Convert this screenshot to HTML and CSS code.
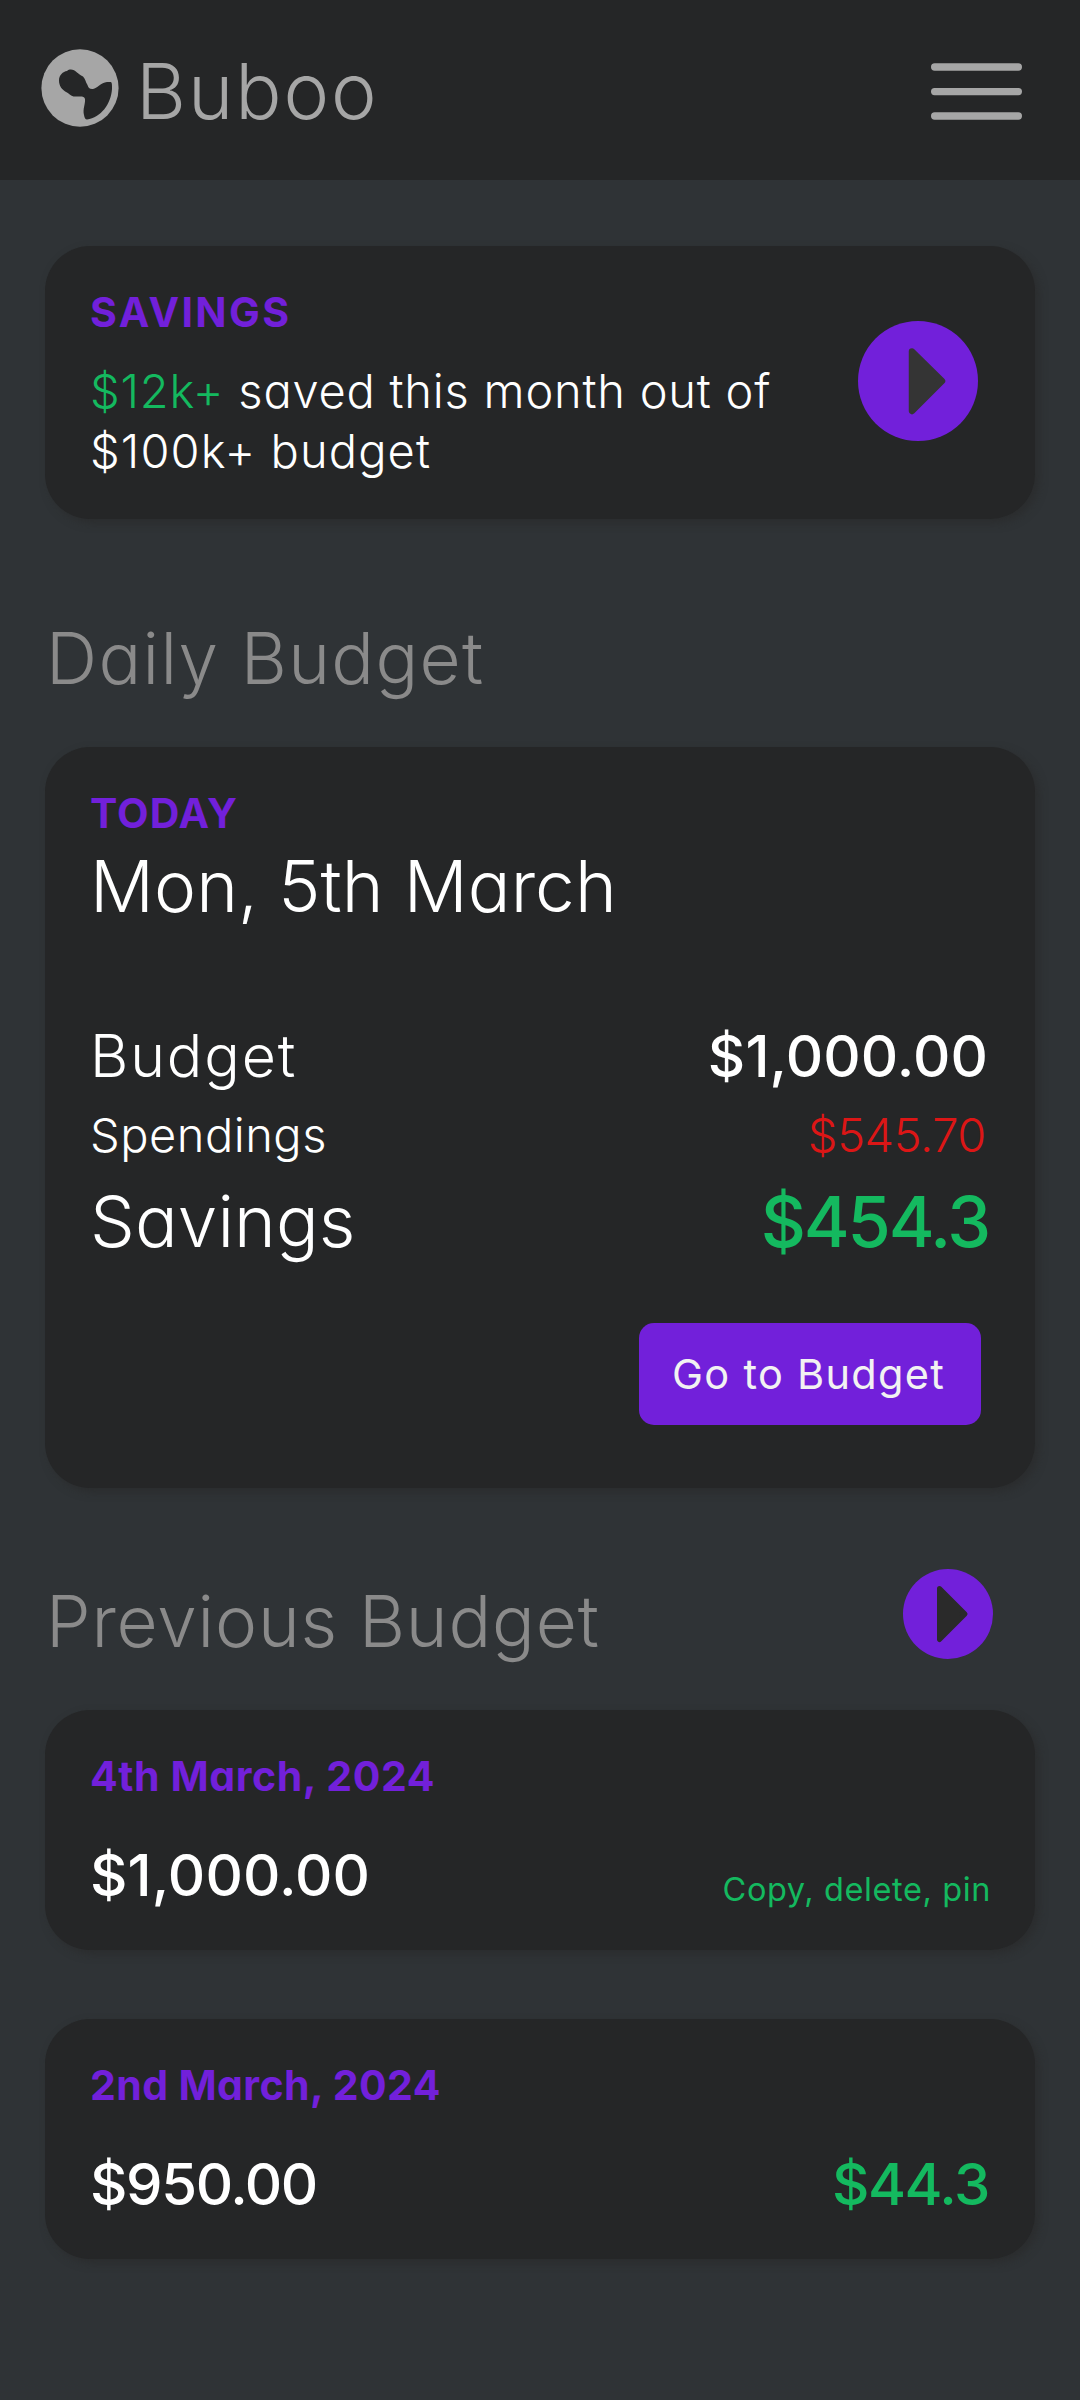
FILE: index.html
```html
<!DOCTYPE html>
<html lang="en">
<head>
<meta charset="utf-8">
<title>Buboo</title>
<link rel="stylesheet" href="styles.css">
</head>
<body>
<header class="topbar">
  <div class="brand">
    <svg class="logo" viewBox="0 0 78 78" aria-hidden="true">
      <ellipse cx="39" cy="39" rx="38.6" ry="38.8" fill="#a6a6a6"/>
      <path fill="#252627" d="M18 31.5C18 26 22 22.5 26 22C29 19.5 33 20.500 36 23.500C38 24.500 39 26.500 42 27.500C44.500 30 44.500 33 46.500 36C47 38.500 49 40.500 52 40C56 39.500 60 33.500 66 33L70 33C71.200 34 71 37 71 40C70 55 60 68.500 46 70.500C44.500 70.500 43.500 69 43 66C41.500 60 44.500 55 44 50C43.500 48 42 47.500 39 47.500L32.500 47.500C30 47 28 44.500 26 43.500C21 41 18 37 18 31.500Z"/>
    </svg>
    <span class="brand-name">Buboo</span>
  </div>
  <svg class="menu" viewBox="0 0 91 58" aria-label="Menu" fill="#a6a6a6">
    <rect y="0.300" width="91" height="7.400" rx="3.700"/>
    <rect y="25" width="91" height="7.200" rx="3.600"/>
    <rect y="49.300" width="91" height="7.400" rx="3.700"/>
  </svg>
</header>

<main class="page">
  <section class="card summary">
    <div>
      <div class="label label-savings">SAVINGS</div>
      <p class="summary-text"><span class="green">$12k+</span> saved this month out of<br><span class="second">$100k+ budget</span></p>
    </div>
    <svg class="go-large" viewBox="0 0 120 120" aria-hidden="true">
      <circle cx="60" cy="60" r="60" fill="#7220da"/>
      <path d="M54 30.500L84 60L54 90Z" fill="#343434" stroke="#343434" stroke-width="6.500" stroke-linejoin="round"/>
    </svg>
  </section>

  <h2 class="heading heading-daily">Daily Budget</h2>

  <section class="card today">
    <div class="label label-today">TODAY</div>
    <div class="date">Mon, 5th March</div>
    <div class="row row-budget"><span class="k-budget">Budget</span><span class="amount">$1,000.00</span></div>
    <div class="row row-spend"><span class="k-spend">Spendings</span><span class="red">$545.70</span></div>
    <div class="row row-save"><span class="k-save">Savings</span><span class="green total">$454.3</span></div>
    <a class="button">Go to Budget</a>
  </section>

  <div class="heading-row">
    <h2 class="heading heading-previous">Previous Budget</h2>
    <svg class="go-small" viewBox="0 0 90 90" aria-hidden="true">
      <circle cx="45" cy="45" r="45" fill="#7220da"/>
      <path d="M36.500 19.500L62 45L36.500 70.500Z" fill="#2a2a2a" stroke="#2a2a2a" stroke-width="5" stroke-linejoin="round"/>
    </svg>
  </div>

  <section class="card entry">
    <div class="label label-date">4th March, 2024</div>
    <div class="row row-entry"><span class="amount">$1,000.00</span><span class="green actions">Copy, delete, pin</span></div>
  </section>
  <section class="card entry">
    <div class="label label-date-wide">2nd March, 2024</div>
    <div class="row row-entry"><span class="amount amount-short">$950.00</span><span class="green saved">$44.3</span></div>
  </section>
</main>
</body>
</html>
```
FILE: styles.css
```css
* { box-sizing: border-box; }

body {
  margin: 0;
  min-height: 2400px;
  background: #2f3336;
  color: #fff;
  font-family: Inter, "Open Sans", sans-serif;
  font-weight: 300;
  font-feature-settings: "cv11";
  white-space: nowrap;
}

.topbar {
  display: flex;
  justify-content: space-between;
  height: 180px;
  padding: 47px 58px 0 41px;
  background: #252627;
}
.brand { display: flex; gap: 17px; }
.logo { width: 78px; height: 78px; margin-top: 2px; }
.brand-name { color: #a6a6a6; font-size: 77px; line-height: 89px; letter-spacing: 1.9px; }
.menu { width: 91px; height: 58px; margin-top: 16px; }

.page { padding: 66px 45px 0; }

.card {
  border-radius: 45px;
  background: #252627;
  box-shadow: 4px 4px 8px rgba(40, 40, 40, 0.6);
  padding: 42px 45px 0;
}

.label { color: #7220da; font-size: 41px; font-weight: 700; line-height: 48px; }
.label-savings { letter-spacing: 2.4px; }
.label-today { letter-spacing: 1px; }
.label-date { letter-spacing: 0.6px; }
.label-date-wide { letter-spacing: 0.4px; }

.green { color: #14b95f; }
.red { color: #dc1616; margin-right: 4px; letter-spacing: -0.4px; }

.summary { display: flex; justify-content: space-between; height: 273px; padding-right: 57px; }
.summary-text { margin: 25px 0 0; font-size: 47px; line-height: 60px; letter-spacing: 0.78px; }
.second { letter-spacing: 1.1px; }
.go-large { width: 120px; height: 120px; margin-top: 33px; }

.heading { margin: 0; color: #8a8a8a; font-size: 71px; font-weight: 300; line-height: 82px; }
.heading-daily { margin: 98px 0 48px 1px; letter-spacing: 1.35px; }
.heading-row { display: flex; justify-content: space-between; margin: 92px 42px 48px 1px; }
.heading-previous { letter-spacing: 0.85px; }
.go-small { width: 90px; height: 90px; margin: -11px 0 -10px; }

.today { display: flex; flex-direction: column; height: 741px; }
.date { margin-top: 8px; font-size: 71px; line-height: 82px; letter-spacing: 0.1px; }

.row { display: flex; justify-content: space-between; }
.row-budget { margin-top: 93px; font-size: 58px; line-height: 72px; }
.row-spend { margin-top: 13px; font-size: 47px; line-height: 59px; }
.row-save { margin-top: 16px; font-size: 71px; line-height: 83px; }
.k-budget { font-size: 59px; letter-spacing: 1.9px; }
.k-spend { letter-spacing: 0.5px; }
.k-save { letter-spacing: 0.1px; }

.amount { margin-right: 2px; font-weight: 500; letter-spacing: 0.1px; }
.amount-short { letter-spacing: -1.4px; }
.total { margin-right: 1px; font-size: 70px; font-weight: 500; letter-spacing: -2.2px; }

.button {
  align-self: flex-end;
  width: 342px;
  height: 102px;
  margin: 60px 9px 0 0;
  padding-left: 33px;
  border-radius: 15px;
  background: #7220da;
  color: #f2f2f2;
  font-size: 41.500px;
  font-weight: 400;
  line-height: 102px;
  letter-spacing: 1.3px;
}

.entry { height: 240px; }
.entry + .entry { margin-top: 69px; }
.row-entry { margin-top: 39px; font-size: 58px; line-height: 72px; }
.actions { margin: 31px -1px 0 0; font-size: 32.500px; font-weight: 400; line-height: 40px; letter-spacing: 0.600px; }
.saved { margin-right: 1px; font-weight: 500; letter-spacing: -1.4px; }
```
